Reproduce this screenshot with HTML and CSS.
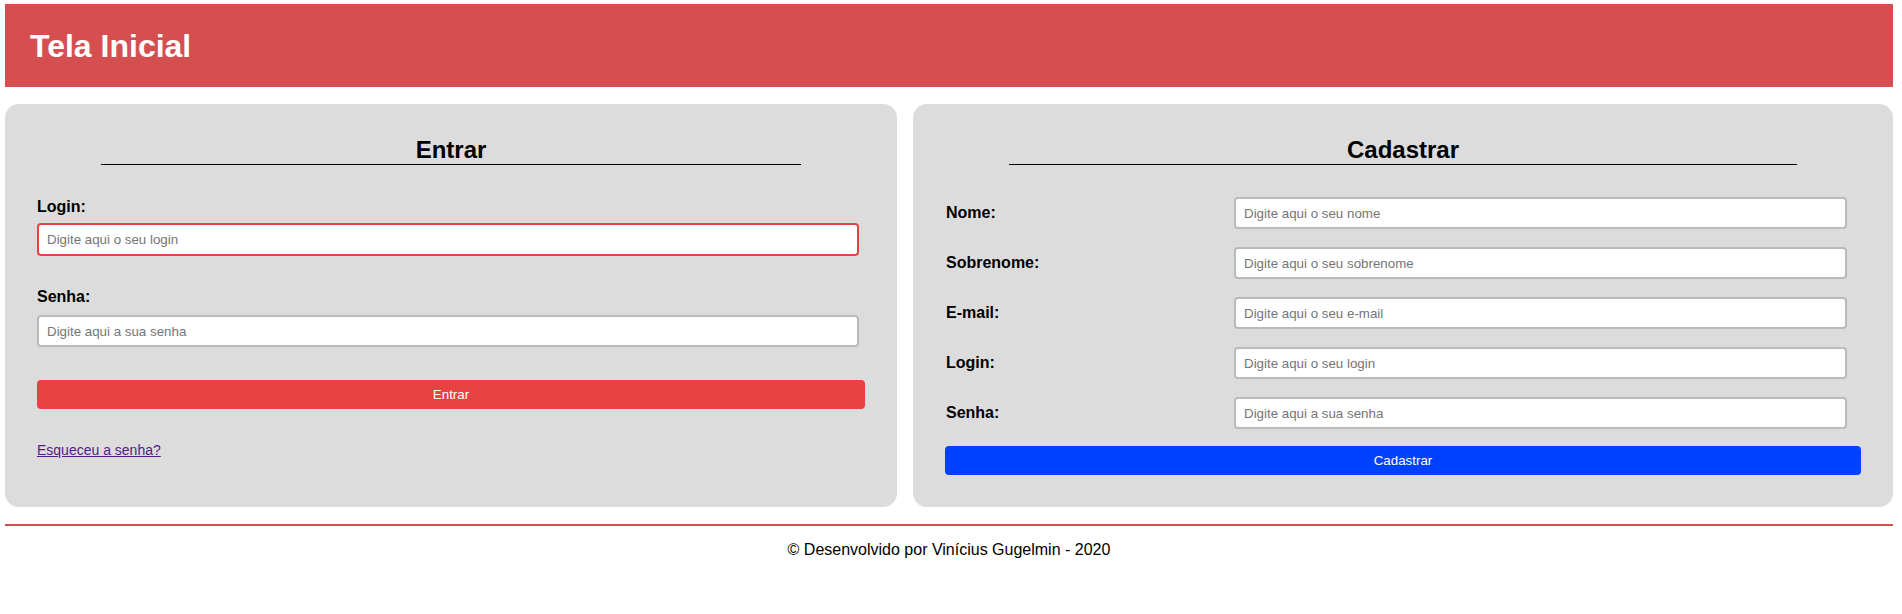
FILE: index.html
```html
<!DOCTYPE html>
<html lang="pt-BR">
<head>
<meta charset="utf-8">
<title>Tela Inicial</title>
<link rel="stylesheet" href="styles.css">
</head>
<body>
<div class="page">
  <header class="topbar">
    <h1 class="title">Tela Inicial</h1>
  </header>
  <main class="cards">
    <section class="card card-login">
      <h2 class="card-title title-login">Entrar</h2>
      <label class="field-label label-first">Login:</label>
      <input class="field field-focus" type="text" placeholder="Digite aqui o seu login">
      <label class="field-label label-next">Senha:</label>
      <input class="field field-senha" type="password" placeholder="Digite aqui a sua senha">
      <button class="btn btn-red">Entrar</button>
      <a class="forgot" href="#">Esqueceu a senha?</a>
    </section>
    <section class="card card-register">
      <h2 class="card-title title-register">Cadastrar</h2>
      <div class="reg-grid">
        <label class="reg-label">Nome:</label>
        <input class="field reg-field" type="text" placeholder="Digite aqui o seu nome">
        <label class="reg-label">Sobrenome:</label>
        <input class="field reg-field" type="text" placeholder="Digite aqui o seu sobrenome">
        <label class="reg-label">E-mail:</label>
        <input class="field reg-field" type="text" placeholder="Digite aqui o seu e-mail">
        <label class="reg-label">Login:</label>
        <input class="field reg-field" type="text" placeholder="Digite aqui o seu login">
        <label class="reg-label">Senha:</label>
        <input class="field reg-field" type="password" placeholder="Digite aqui a sua senha">
      </div>
      <button class="btn btn-blue">Cadastrar</button>
    </section>
  </main>
  <footer class="footer">
    <p class="footer-text">© Desenvolvido por Vinícius Gugelmin - 2020</p>
  </footer>
</div>
</body>
</html>
```

FILE: styles.css
```css
* { box-sizing: border-box; }

html, body {
  margin: 0;
  padding: 0;
  background: #ffffff;
  font-family: "Liberation Sans", Arial, sans-serif;
  color: #000;
}

.page {
  padding: 4px 9px 0 5px;
}

.topbar {
  background: #d64f50;
  height: 83px;
  padding: 24px 25px 0 25px;
}

.title {
  margin: 0;
  font-size: 32px;
  font-weight: bold;
  color: #ffffff;
  line-height: 37px;
}

.cards {
  display: grid;
  grid-template-columns: 892px 980px;
  gap: 16px;
  margin-top: 17px;
}

.card {
  background: #dcdcdc;
  border-radius: 14px;
  height: 403px;
  padding: 32px 32px 0 32px;
  display: flex;
  flex-direction: column;
  align-items: flex-start;
}

.card-title {
  margin: 0 auto;
  font-size: 24px;
  font-weight: bold;
  line-height: 28px;
  text-align: center;
  border-bottom: 1px solid #000;
  height: 29px;
}

.title-login { width: 700px; }
.title-register { width: 788px; }

.field-label {
  font-size: 16px;
  font-weight: bold;
  line-height: 18px;
}

.label-first { margin-top: 33px; }
.label-next { margin-top: 32px; }

.field {
  display: block;
  width: 822px;
  height: 32px;
  border: 2px solid #bababa;
  border-radius: 4px;
  background: #ffffff;
  padding: 0 8px;
  font-family: "Liberation Sans", Arial, sans-serif;
  font-size: 13.333px;
  color: #000;
  outline: none;
}

.field::placeholder { color: #757575; }

.field-focus {
  border-color: #e84141;
  height: 33px;
  margin-top: 7px;
}

.field-senha { margin-top: 9px; }

.btn {
  display: block;
  width: 100%;
  height: 29px;
  border: none;
  border-radius: 4px;
  color: #ffffff;
  font-family: "Liberation Sans", Arial, sans-serif;
  font-size: 13.333px;
  padding: 0;
  cursor: pointer;
}

.btn-red {
  background: #e84141;
  margin-top: 33px;
}

.forgot {
  margin-top: 33px;
  font-size: 14px;
  line-height: 16px;
  color: #551a8b;
  text-decoration: underline;
}

.reg-grid {
  display: grid;
  grid-template-columns: 289px 613px;
  row-gap: 18px;
  align-items: center;
  margin-top: 32px;
}

.reg-label {
  font-size: 16px;
  font-weight: bold;
  padding-left: 1px;
}

.reg-field {
  width: 613px;
}

.btn-blue {
  background: #0040ff;
  margin-top: 17px;
}

.footer {
  margin-top: 17px;
  border-top: 2px solid #d64f50;
}

.footer-text {
  margin: 15px 0 0 0;
  text-align: center;
  font-size: 16px;
  line-height: 18px;
}
```
